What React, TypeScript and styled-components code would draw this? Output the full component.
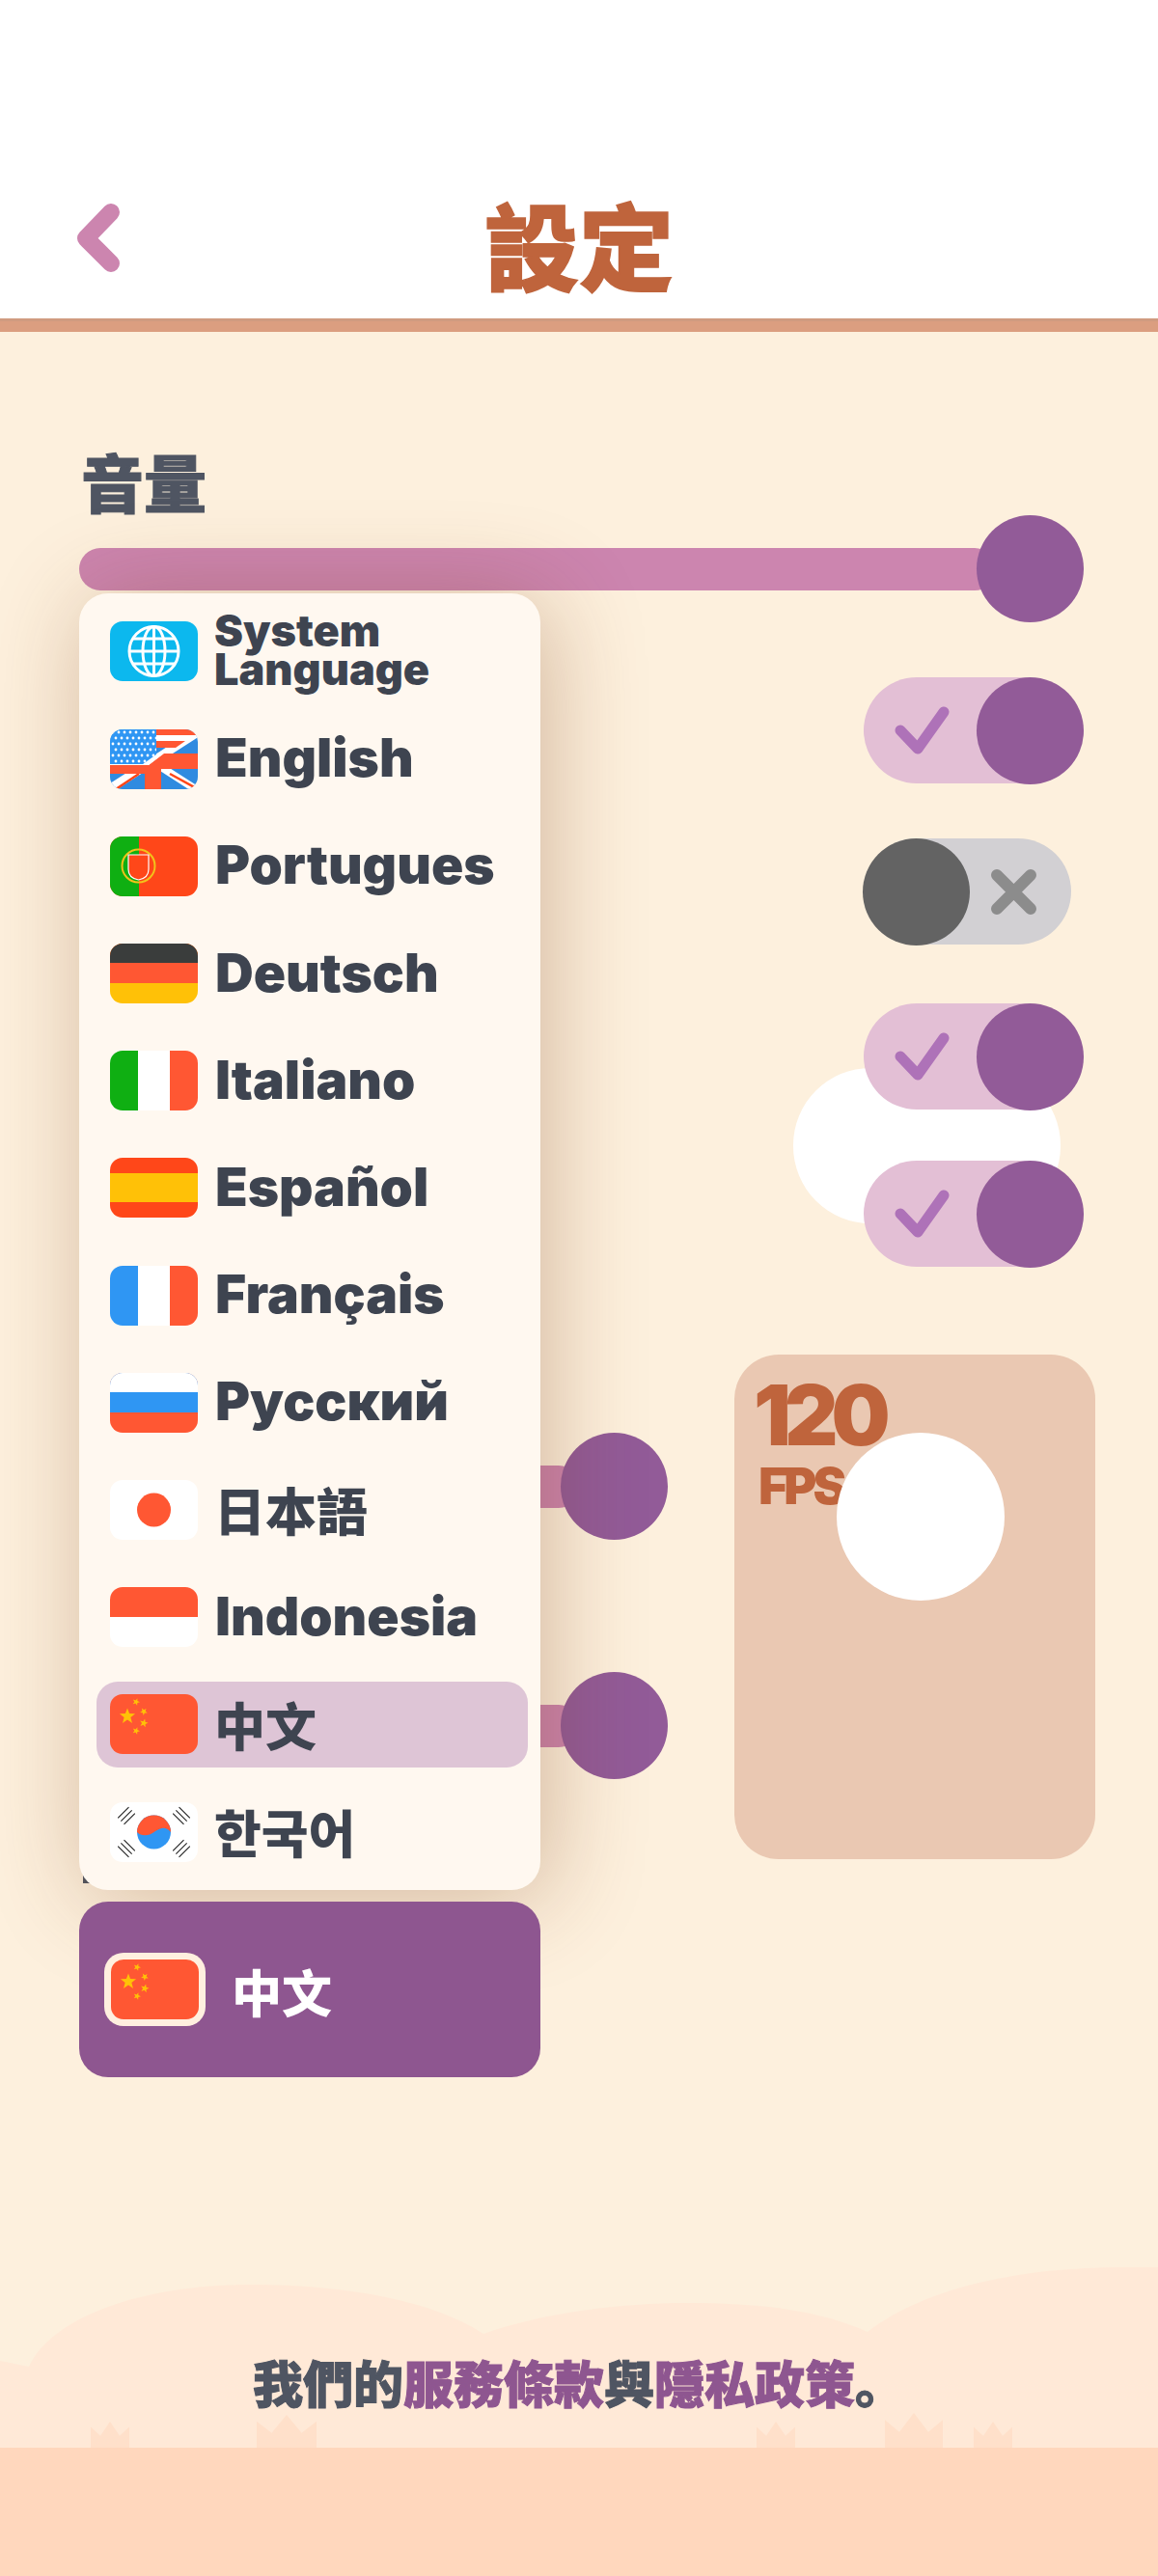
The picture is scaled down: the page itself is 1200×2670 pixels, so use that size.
import styled, { createGlobalStyle } from "styled-components";

const GlobalStyle = createGlobalStyle`
  html, body {
    margin: 0;
    padding: 0;
    background: #fdf0dd;
  }
  * {
    box-sizing: border-box;
  }
`;

const FONT = `"Inter", "Noto Sans CJK TC", sans-serif`;
const CJK = `"Noto Sans CJK TC", sans-serif`;

const star = (cx: number, cy: number, r: number, rot = 0) => {
  const pts: string[] = [];
  for (let i = 0; i < 10; i++) {
    const a = ((i * 36 + rot - 90) * Math.PI) / 180;
    const d = i % 2 ? r * 0.42 : r;
    pts.push(`${(cx + Math.cos(a) * d).toFixed(2)},${(cy + Math.sin(a) * d).toFixed(2)}`);
  }
  return pts.join(" ");
};

const RED = "#ff5733";
const DEEP = "#ff4719";
const BLUE = "#2f96f3";
const GREEN = "#0faf12";
const GOLD = "#ffc107";

function usDots() {
  const dots = [];
  for (let r = 0; r < 6; r++) {
    for (let c = 0; c < 8; c++) {
      dots.push(<circle key={`${r}-${c}`} cx={3 + c * 6 + (r % 2 ? 3 : 0)} cy={3 + r * 6} r={1.4} fill="#fff" />);
    }
  }
  return dots;
}

function Trigram({ x, y, rot }: { x: number; y: number; rot: number }) {
  return (
    <g transform={`translate(${x} ${y}) rotate(${rot})`} stroke="#222" strokeWidth={1.1}>
      <path d="M-8 -4.5H8M-8 0H8M-8 4.5H8" />
    </g>
  );
}

function FlagArt({ code }: { code: string }) {
  switch (code) {
    case "sys":
      return (
        <>
          <rect width="91" height="62" fill="#0cb8ee" />
          <g fill="none" stroke="#fff" strokeWidth="3">
            <circle cx="45.5" cy="31" r="25.5" />
            <ellipse cx="45.5" cy="31" rx="11.5" ry="25.5" />
            <path d="M45.5 5.5V56.5M20 31H71M24 18H67M24 44H67" />
          </g>
        </>
      );
    case "en":
      return (
        <>
          <rect width="91" height="62" fill="#2f8be0" />
          <path d="M-4 64L91 3" stroke="#fff" strokeWidth="9" />
          <path d="M42 32L95 66" stroke="#fff" strokeWidth="8" />
          <path d="M6 62L30 46M62 46L91 62" stroke={DEEP} strokeWidth="2.5" />
          <path d="M0 46H36V62H53V41H91V25H56L40 37H0Z" fill={RED} />
          <path d="M48 0H91V6H48ZM48 12H78L68 19H48Z" fill={RED} />
          <path d="M48 6H91V7L80 12H48Z" fill="#fff" />
          <path d="M0 37H40L54 26L48 26L34 36H0Z" fill="#fff" />
          <path d="M0 0H48V26L34 36H0Z" fill="#2f96f3" />
          <g clipPath="url(#usCanton)">{usDots()}</g>
          <defs>
            <clipPath id="usCanton">
              <path d="M0 0H48V26L34 36H0Z" />
            </clipPath>
          </defs>
        </>
      );
    case "pt":
      return (
        <>
          <rect width="91" height="62" fill={DEEP} />
          <rect width="30" height="62" fill={GREEN} />
          <circle cx="29.5" cy="30.5" r="17" fill="none" stroke="#f2c21a" strokeWidth="2" />
          <path d="M19 19H40V34C40 41 35 44 29.5 45C24 44 19 41 19 34Z" fill={DEEP} stroke="#fff" strokeWidth="1.2" />
        </>
      );
    case "de":
      return (
        <>
          <rect width="91" height="62" fill={GOLD} />
          <rect width="91" height="41" fill={RED} />
          <rect width="91" height="20" fill="#3a3d3c" />
        </>
      );
    case "it":
      return (
        <>
          <rect width="91" height="62" fill="#fff" />
          <rect width="29" height="62" fill={GREEN} />
          <rect x="62" width="29" height="62" fill={RED} />
        </>
      );
    case "es":
      return (
        <>
          <rect width="91" height="62" fill={DEEP} />
          <rect y="16" width="91" height="30" fill={GOLD} />
        </>
      );
    case "fr":
      return (
        <>
          <rect width="91" height="62" fill="#fff" />
          <rect width="29" height="62" fill={BLUE} />
          <rect x="62" width="29" height="62" fill={RED} />
        </>
      );
    case "ru":
      return (
        <>
          <rect width="91" height="62" fill={RED} />
          <rect width="91" height="41" fill={BLUE} />
          <rect width="91" height="20" fill="#fff" />
        </>
      );
    case "ja":
      return (
        <>
          <rect width="91" height="62" fill="#fff" />
          <circle cx="45.5" cy="31" r="17.5" fill={RED} />
        </>
      );
    case "id":
      return (
        <>
          <rect width="91" height="62" fill="#fff" />
          <rect width="91" height="31" fill={RED} />
        </>
      );
    case "zh":
      return (
        <>
          <rect width="91" height="62" fill={RED} />
          <polygon points={star(18, 23, 8.5)} fill={GOLD} />
          <polygon points={star(27, 8, 4, 20)} fill={GOLD} />
          <polygon points={star(35, 18, 4, 40)} fill={GOLD} />
          <polygon points={star(35, 30, 4.6, 15)} fill={GOLD} />
          <polygon points={star(27, 38, 4, 20)} fill={GOLD} />
        </>
      );
    case "ko":
      return (
        <>
          <rect width="91" height="62" fill="#fff" />
          <circle cx="45.5" cy="31" r="17.5" fill={BLUE} />
          <path d="M28 31A17.5 17.5 0 0 1 63 31C58 25 53 26 47 30C41 35 33 36 28 31Z" fill={RED} />
          <Trigram x={17} y={14} rot={-45} />
          <Trigram x={74} y={14} rot={45} />
          <Trigram x={17} y={48} rot={45} />
          <Trigram x={74} y={48} rot={-45} />
        </>
      );
    default:
      return null;
  }
}

function Flag({ code }: { code: string }) {
  return (
    <FlagBox>
      <svg width="91" height="62" viewBox="0 0 91 62">
        <FlagArt code={code} />
      </svg>
    </FlagBox>
  );
}

const languages = [
  { code: "sys", name: "System Language" },
  { code: "en", name: "English" },
  { code: "pt", name: "Portugues" },
  { code: "de", name: "Deutsch" },
  { code: "it", name: "Italiano" },
  { code: "es", name: "Español" },
  { code: "fr", name: "Français" },
  { code: "ru", name: "Русский" },
  { code: "ja", name: "日本語" },
  { code: "id", name: "Indonesia" },
  { code: "zh", name: "中文" },
  { code: "ko", name: "한국어" },
];

function Toggle({ on }: { on: boolean }) {
  return (
    <ToggleTrack $on={on}>
      {on ? (
        <>
          <svg width="57" height="50" viewBox="0 0 57 50">
            <path d="M6 25L24 44L51 6" fill="none" stroke="#ae72b8" strokeWidth="11" strokeLinecap="round" strokeLinejoin="round" />
          </svg>
          <ToggleThumb $on />
        </>
      ) : (
        <>
          <ToggleThumb $on={false} />
          <svg width="47" height="47" viewBox="0 0 47 47">
            <path d="M6 6L41 41M41 6L6 41" fill="none" stroke="#8c8c8c" strokeWidth="12" strokeLinecap="round" />
          </svg>
        </>
      )}
    </ToggleTrack>
  );
}

function Slider({ width }: { width?: number }) {
  return (
    <SliderRow $width={width}>
      <SliderTrack />
      <SliderThumb />
    </SliderRow>
  );
}

function FooterArt() {
  const tuft = (x: number, w: number, h: number) =>
    `${x},187 ${x},${187 - h * 0.8} ${x + w * 0.25},${187 - h * 0.45} ${x + w * 0.5},${187 - h} ${x + w * 0.75},${187 - h * 0.45} ${x + w},${187 - h * 0.8} ${x + w},187`;
  return (
    <FooterSvg viewBox="0 0 1200 320" preserveAspectRatio="none">
      <path
        d="M0 97L30 103C55 50 150 18 260 18C360 18 450 35 501 69C560 48 640 37 712 37C790 37 850 45 899 67C960 20 1060 0 1163 0H1200V320H0Z"
        fill="#ffe9d7"
      />
      {[
        [94, 40, 27],
        [266, 62, 34],
        [784, 40, 27],
        [917, 60, 36],
        [1009, 40, 27],
      ].map(([x, w, h]) => (
        <polygon key={x} points={tuft(x, w, h)} fill="#ffe0ca" />
      ))}
      <rect y="187" width="1200" height="133" fill="#ffd7bd" />
    </FooterSvg>
  );
}

export default function App() {
  return (
    <Page>
      <GlobalStyle />
      <Header>
        <BackButton>
          <svg width="44" height="72" viewBox="0 0 44 72">
            <path d="M35 9L9 36L35 62" fill="none" stroke="#cc85af" strokeWidth="18" strokeLinecap="round" strokeLinejoin="round" />
          </svg>
        </BackButton>
        <Title>設定</Title>
      </Header>
      <HeaderRule />
      <Main>
        <SectionLabel>音量</SectionLabel>
        <Slider />
        <Toggles>
          <WhiteBlob />
          <Toggle on />
          <Toggle on={false} />
          <ToggleGap $top={61}>
            <Toggle on />
          </ToggleGap>
          <ToggleGap $top={53}>
            <Toggle on />
          </ToggleGap>
        </Toggles>
        <LowerArea>
          <LowerSliders>
            <Slider width={610} />
            <Slider width={610} />
          </LowerSliders>
          <FpsCard>
            <FpsValue>120</FpsValue>
            <FpsUnit>FPS</FpsUnit>
            <FpsDot />
          </FpsCard>
        </LowerArea>
        <LangSelect>
          <LabelStub />
          <LangMenu>
            {languages.map((l) => (
              <LangRow key={l.code} $active={l.code === "zh"}>
                <Flag code={l.code} />
                <LangName $small={l.code === "sys"} $cjk={["ja", "zh", "ko"].includes(l.code)}>
                  {l.name}
                </LangName>
              </LangRow>
            ))}
          </LangMenu>
          <LangButton>
            <ButtonFlag>
              <Flag code="zh" />
            </ButtonFlag>
            <ButtonText>中文</ButtonText>
          </LangButton>
        </LangSelect>
      </Main>
      <Footer>
        <FooterArt />
        <FooterText>
          我們的<FooterLink>服務條款</FooterLink>與<FooterLink>隱私政策</FooterLink>
          <FooterPeriod>。</FooterPeriod>
        </FooterText>
      </Footer>
    </Page>
  );
}

const Page = styled.div`
  width: 1200px;
  height: 2670px;
  display: flex;
  flex-direction: column;
  background: #fdf0dd;
  overflow: hidden;
`;

const Header = styled.header`
  height: 330px;
  padding: 166px 0 0 80px;
  display: flex;
  align-items: center;
  background: #fff;
  position: relative;
`;

const BackButton = styled.div`
  width: 44px;
  height: 72px;
  margin-top: -2px;
  display: flex;
`;

const Title = styled.h1`
  margin: 6px 0 0 0;
  flex: 1;
  padding-right: 124px;
  text-align: center;
  font-family: ${CJK};
  font-size: 98px;
  font-weight: 900;
  line-height: 120px;
  color: #bf643c;
  -webkit-text-stroke: 1.5px #bf643c;
`;

const HeaderRule = styled.div`
  height: 14px;
  background: linear-gradient(#d09b80 0 3px, #db9e80 3px);
`;

const Main = styled.main`
  display: flex;
  flex-direction: column;
  padding: 112px 77px 0 82px;
`;

const SectionLabel = styled.div`
  height: 78px;
  padding: 3px 0 0 2px;
  font-family: ${CJK};
  font-size: 65px;
  font-weight: 900;
  line-height: 78px;
  color: #4f5562;
  -webkit-text-stroke: 1px #4f5562;
`;

const SliderRow = styled.div<{ $width?: number }>`
  width: ${({ $width }) => ($width ? `${$width}px` : "100%")};
  height: 111px;
  display: flex;
  align-items: center;
`;

const SliderTrack = styled.div`
  flex: 1;
  height: 44px;
  border-radius: 22px;
  background: #cc85af;
`;

const SliderThumb = styled.div`
  width: 111px;
  height: 111px;
  margin-left: -20px;
  flex-shrink: 0;
  border-radius: 50%;
  background: #925b98;
`;

const Toggles = styled.div`
  margin-top: 57px;
  padding-right: 13px;
  display: flex;
  flex-direction: column;
  align-items: flex-end;
  gap: 57px;
  position: relative;
`;

const ToggleGap = styled.div<{ $top: number }>`
  margin-top: ${({ $top }) => $top - 57}px;
  position: relative;
`;

const WhiteBlob = styled.div`
  position: absolute;
  top: 405px;
  right: 24px;
  width: 277px;
  height: 161px;
  border-radius: 80px;
  background: #fff;
`;

const ToggleTrack = styled.div<{ $on: boolean }>`
  width: 215px;
  height: 110px;
  padding-left: ${({ $on }) => ($on ? "32px" : "0")};
  display: flex;
  align-items: center;
  border-radius: 55px;
  background: ${({ $on }) => ($on ? "#e3bfd5" : "#d2d0d3")};
  position: relative;

  & > svg {
    margin-left: ${({ $on }) => ($on ? "0" : "22px")};
  }
`;

const ToggleThumb = styled.div<{ $on: boolean }>`
  width: 111px;
  height: 111px;
  flex-shrink: 0;
  border-radius: 50%;
  margin-left: ${({ $on }) => ($on ? "auto" : "-1px")};
  margin-right: ${({ $on }) => ($on ? "-13px" : "0")};
  background: ${({ $on }) => ($on ? "#925b98" : "#636363")};
`;

const LowerArea = styled.div`
  margin: 91px -12px 0 0;
  display: flex;
  justify-content: space-between;
`;

const LowerSliders = styled.div`
  padding-top: 81px;
  display: flex;
  flex-direction: column;
  gap: 137px;
`;

const FpsCard = styled.div`
  width: 374px;
  height: 523px;
  padding: 18px 0 0 20px;
  border-radius: 46px;
  background: #eac8b2;
  position: relative;
`;

const FpsValue = styled.div`
  font-family: ${FONT};
  font-size: 86px;
  font-weight: 900;
  letter-spacing: -7px;
  line-height: 90px;
  color: #bf643c;
`;

const FpsUnit = styled.div`
  margin-top: 1px;
  padding-left: 5px;
  font-family: ${FONT};
  font-size: 52px;
  font-weight: 900;
  letter-spacing: -4px;
  line-height: 56px;
  color: #bf643c;
`;

const FpsDot = styled.div`
  position: absolute;
  top: 81px;
  left: 106px;
  width: 174px;
  height: 174px;
  border-radius: 50%;
  background: #fff;
`;

const LangSelect = styled.div`
  width: 478px;
  margin-top: 44px;
  position: relative;
`;

const LabelStub = styled.div`
  position: absolute;
  top: -27px;
  left: 4px;
  width: 12px;
  height: 8px;
  background: #4f5562;
`;

const LangMenu = styled.div`
  position: absolute;
  left: 0;
  right: 0;
  bottom: calc(100% + 12px);
  padding: 16px 13px 16px 18px;
  display: flex;
  flex-direction: column;
  gap: 22.2px;
  border-radius: 30px;
  background: #fff8f0;
  box-shadow: 8px 8px 100px rgba(120, 60, 20, 0.32);
  z-index: 2;
`;

const LangRow = styled.div<{ $active: boolean }>`
  height: 89px;
  padding-left: 14px;
  display: flex;
  align-items: center;
  gap: 20px;
  border-radius: 22px;
  background: ${({ $active }) => ($active ? "#dec5d6" : "transparent")};
`;

const FlagBox = styled.div`
  width: 91px;
  height: 62px;
  flex-shrink: 0;
  display: flex;
  border-radius: 13px;
  overflow: hidden;
`;

const LangName = styled.div<{ $small: boolean; $cjk: boolean }>`
  padding: ${({ $cjk }) => ($cjk ? "7px 0 0" : "0 0 3px")};
  margin-left: ${({ $small, $cjk }) => ($small ? "-3px" : $cjk ? "-3px" : "-2px")};
  font-family: ${FONT};
  font-size: ${({ $small, $cjk }) => ($small ? "45px" : $cjk ? "53px" : "55px")};
  font-weight: 900;
  line-height: ${({ $small }) => ($small ? "40px" : "60px")};
  width: ${({ $small }) => ($small ? "260px" : "auto")};
  color: #3e4450;
`;

const LangButton = styled.div`
  height: 182px;
  padding-left: 26px;
  display: flex;
  align-items: center;
  gap: 27px;
  border-radius: 30px;
  background: #8e5690;
  position: relative;
  z-index: 3;
`;

const ButtonFlag = styled.div`
  padding: 7px;
  border-radius: 20px;
  background: #ffefdf;
`;

const ButtonText = styled.div`
  padding-top: 4px;
  font-family: ${CJK};
  font-size: 52px;
  font-weight: 900;
  line-height: 60px;
  color: #fff;
`;

const Footer = styled.footer`
  margin-top: auto;
  height: 320px;
  padding: 84px 0 0 0;
  display: flex;
  justify-content: center;
  position: relative;
`;

const FooterSvg = styled.svg`
  position: absolute;
  left: 0;
  top: 0;
  width: 100%;
  height: 100%;
`;

const FooterText = styled.div`
  position: relative;
  font-family: ${CJK};
  font-size: 52px;
  font-weight: 900;
  line-height: 70px;
  color: #4f5562;
  -webkit-text-stroke: 1px currentColor;
`;

const FooterLink = styled.span`
  color: #8e5690;
`;

const FooterPeriod = styled.span`
  font-family: "Noto Sans CJK SC", sans-serif;
`;
